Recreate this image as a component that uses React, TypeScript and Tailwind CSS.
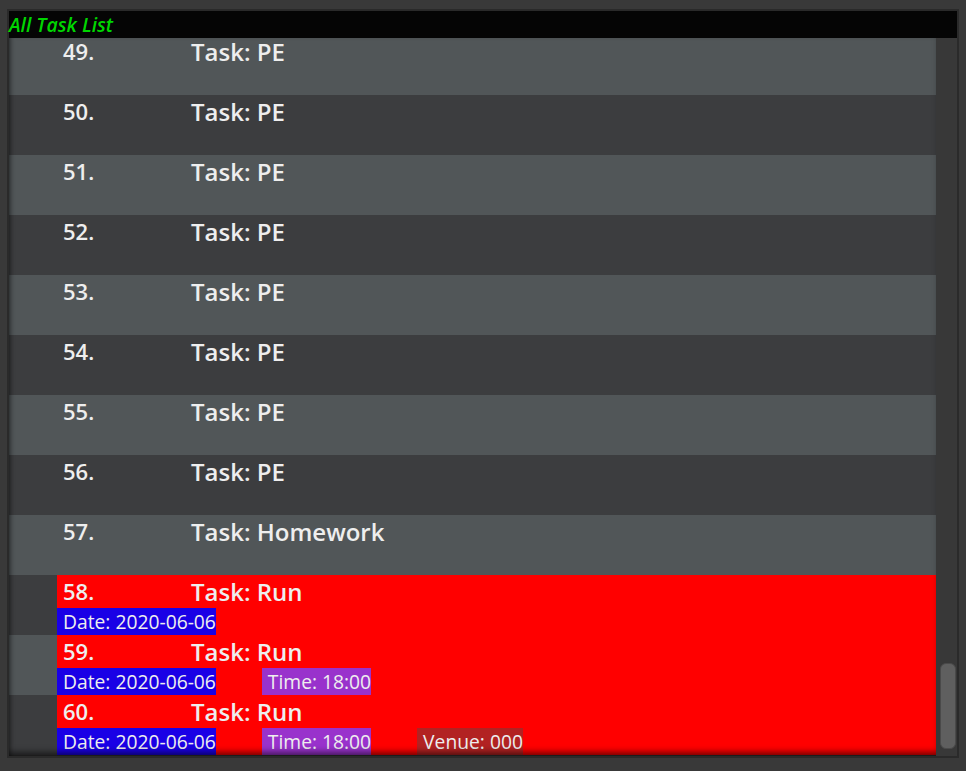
import React from "react";

type Task = {
  index: number;
  name: string;
  date?: string;
  time?: string;
  venue?: string;
};

const tasks: Task[] = [
  ...Array.from({ length: 8 }, (_, i) => ({ index: 49 + i, name: "PE" })),
  { index: 57, name: "Homework" },
  { index: 58, name: "Run", date: "2020-06-06" },
  { index: 59, name: "Run", date: "2020-06-06", time: "18:00" },
  { index: 60, name: "Run", date: "2020-06-06", time: "18:00", venue: "000" },
];

// first row is scrolled 3px out of view
const TaskRow = ({ task, odd, first }: { task: Task; odd: boolean; first: boolean }) => {
  const urgent = !!task.date;
  return (
    <div
      className={`${first ? "h-[57px]" : "h-[60px]"} shrink-0 pl-[48px] ${odd ? "bg-[#515658]" : "bg-[#3c3d3f]"}`}
    >
      <div className={`h-full flex flex-col ${urgent ? "bg-[#ff0000]" : ""}`}>
        <div
          className={`flex items-center pl-[6px] font-semibold text-[#eeeeee] ${
            first ? "h-[27px] leading-[27px]" : "h-[33px] leading-[33px]"
          }`}
        >
          <span className="w-[128px] text-[22px]">{task.index}.</span>
          <span className="text-[24px]">Task: {task.name}</span>
        </div>
        {urgent && (
          <div className="flex h-[27px] gap-[46px] text-[19.25px] text-[#eeeeee] leading-[27px]">
            <span className="bg-[#1a00e6] pl-[6px]">Date: {task.date}</span>
            {task.time && <span className="bg-[#9932cc] pl-[6px]">Time: {task.time}</span>}
            {task.venue && <span className="bg-[#b22222] pl-[6px]">Venue: {task.venue}</span>}
          </div>
        )}
      </div>
    </div>
  );
};

export default function App() {
  return (
    <div
      className="w-[966px] h-[771px] bg-[#393939] pt-[9px] pl-[7px]"
      style={{ fontFamily: '"Open Sans", "Noto Sans", sans-serif' }}
    >
      <div className="w-[952px] h-[749px] border-2 border-[#2a2a2a] flex flex-col">
        <div className="h-[27px] bg-[#050505] flex items-center">
          <span className="text-[19.5px] italic font-semibold text-[#00d600] leading-none">All Task List</span>
        </div>
        <div className="flex-1 flex min-h-0">
          <div className="relative flex-1 overflow-hidden">
            <div className="flex flex-col">
              {tasks.map((t, i) => (
                <TaskRow key={t.index} task={t} odd={i % 2 === 0} first={i === 0} />
              ))}
            </div>
            <div className="pointer-events-none absolute inset-0 shadow-[inset_0_-7px_6px_-3px_rgba(0,0,0,0.55),inset_4px_0_5px_-3px_rgba(0,0,0,0.5)]" />
          </div>
          <div className="w-[21px] bg-[#383838] flex flex-col justify-end pb-[7px] pl-[4px] pr-[1px]">
            <div className="h-[86px] rounded-[6px] bg-[#5f5f5f] border border-[#4a4a4a]" />
          </div>
        </div>
      </div>
    </div>
  );
}
